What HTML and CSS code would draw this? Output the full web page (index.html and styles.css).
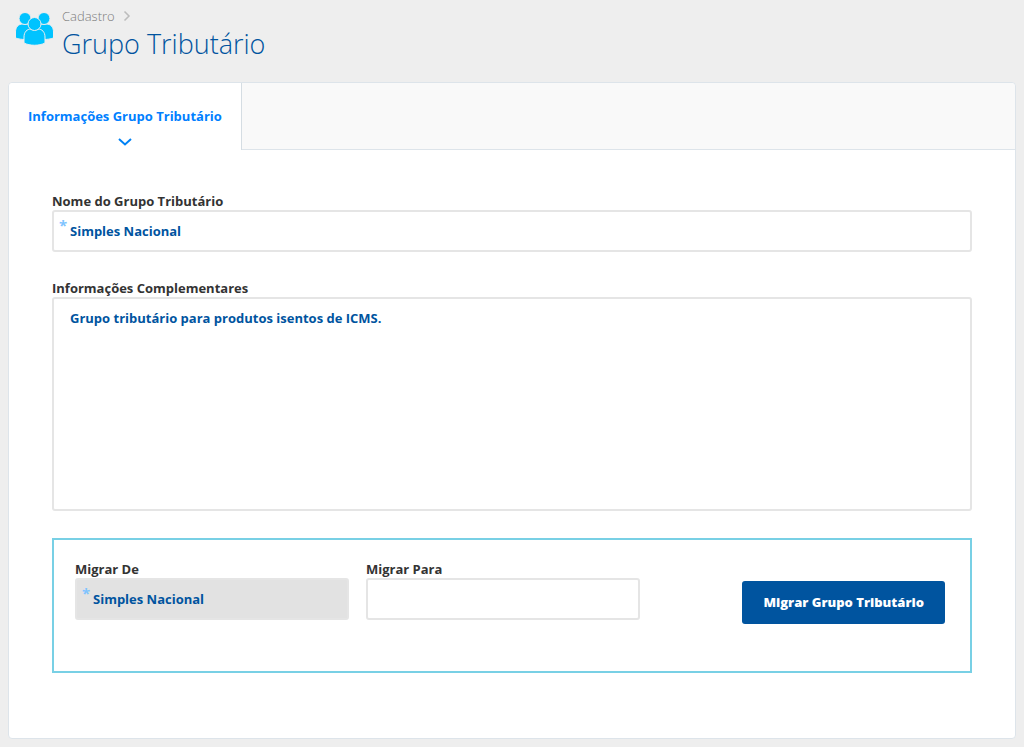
FILE: index.html
```html
<!DOCTYPE html>
<html lang="pt-BR">
<head>
<meta charset="utf-8">
<meta name="viewport" content="width=device-width, initial-scale=1">
<title>Grupo Tributário</title>
<link rel="stylesheet" href="styles.css">
</head>
<body>
<header class="page-header">
  <svg class="page-icon" viewBox="0 0 40 34" aria-hidden="true">
    <g fill="#00c3ff" stroke="#eeeeee" stroke-width="1">
      <path d="M.5 26V20c0-5 3-8 7-8h7c4 0 6 3 6 8v6c-6 2-14 2-20 0z"/>
      <path d="M38.500 26V20c0-5-3-8-7-8h-7c-4 0-6 3-6 8v6c6 2 14 2 20 0z"/>
      <circle cx="10" cy="6.500" r="6"/>
      <circle cx="29" cy="6.500" r="6"/>
      <path d="M9 31v-6c0-5 3-8 7-8h7c4 0 7 3 7 8v6c-6 3-15 3-21 0z"/>
      <circle cx="19.500" cy="12" r="6.500"/>
    </g>
  </svg>
  <div class="page-heading">
    <nav class="breadcrumb" aria-label="Navegação">
      <a href="#">Cadastro</a>
      <svg class="crumb-arrow" viewBox="0 0 8 12" aria-hidden="true"><path d="M1.500 1.500 6 6l-4.500 4.500" fill="none" stroke="#bcbcbc" stroke-width="1.500"/></svg>
    </nav>
    <h1 class="page-title">Grupo Tributário</h1>
  </div>
</header>
<main class="panel">
  <div class="tab-bar" role="tablist">
    <button class="tab" type="button" role="tab" aria-selected="true">
      <span>Informações Grupo Tributário</span>
      <svg class="tab-arrow" viewBox="0 0 14 8" aria-hidden="true"><path d="m1 1 6 5.500L13 1" fill="none" stroke="#0082f5" stroke-width="2"/></svg>
    </button>
  </div>
  <form class="form">
    <div class="field">
      <label class="label" for="nome">Nome do Grupo Tributário</label>
      <div class="control required">
        <input class="input" id="nome" type="text" value="Simples Nacional" required>
      </div>
    </div>
    <div class="field">
      <label class="label" for="info">Informações Complementares</label>
      <textarea class="input textarea" id="info" spellcheck="false">Grupo tributário para produtos isentos de ICMS.</textarea>
    </div>
    <section class="migrate">
      <div class="migrate-field">
        <label class="label" for="de">Migrar De</label>
        <div class="control required">
          <input class="input input-disabled" id="de" type="text" value="Simples Nacional" readonly>
        </div>
      </div>
      <div class="migrate-field">
        <label class="label" for="para">Migrar Para</label>
        <div class="control">
          <input class="input" id="para" type="text">
        </div>
      </div>
      <button class="submit" type="button">Migrar Grupo Tributário</button>
    </section>
  </form>
</main>
</body>
</html>
```
FILE: styles.css
```css
* {
  box-sizing: border-box;
}

body {
  display: flex;
  flex-direction: column;
  min-height: 100vh;
  margin: 0;
  padding: 8px;
  background: #eeeeee;
  color: #333333;
  font-family: "Open Sans", sans-serif;
  font-size: 13px;
  line-height: 18px;
}

.page-header {
  display: flex;
  gap: 7px;
  padding: 0 7px 20px;
}

.page-icon {
  width: 40px;
  height: 34px;
  margin-top: 4px;
}

.breadcrumb {
  display: flex;
  align-items: center;
  gap: 8px;
  height: 16px;
}

.breadcrumb a {
  color: #7c7c7c;
  font-weight: 300;
  text-decoration: none;
}

.crumb-arrow {
  width: 8px;
  height: 12px;
}

.page-title {
  margin: 2px 0 0;
  color: #00549f;
  font-size: 27px;
  font-weight: 300;
  line-height: 36px;
}

.panel {
  flex: 1;
  background: #ffffff;
  border: 1px solid #dde4ea;
  border-radius: 4px;
}

.tab-bar {
  display: flex;
  background: #f9f9f9;
  border-radius: 4px 4px 0 0;
  box-shadow: inset 0 -1px #dde4ea;
}

.tab {
  display: flex;
  flex-direction: column;
  align-items: center;
  gap: 13px;
  padding: 24px 19px 4px;
  background: #ffffff;
  border: 0;
  border-right: 1px solid #d5dde3;
  border-radius: 4px 0 0 0;
  color: #0080ff;
  font: inherit;
  font-weight: 700;
}

.tab-arrow {
  width: 14px;
  height: 8px;
}

.form {
  display: flex;
  flex-direction: column;
  gap: 27px;
  padding: 42px 43px 60px;
}

.field,
.migrate-field {
  display: flex;
  flex-direction: column;
}

.label {
  font-weight: 700;
}

.control {
  position: relative;
}

.required::before {
  content: "*";
  position: absolute;
  top: 6px;
  left: 7px;
  color: #80c4ff;
  font-size: 15px;
  font-weight: 700;
}

.input {
  display: block;
  width: 100%;
  height: 42px;
  padding: 0 16px;
  background: #ffffff;
  border: 2px solid #e5e5e5;
  border-radius: 3px;
  color: #00549f;
  font: inherit;
  font-weight: 700;
}

.textarea {
  height: 214px;
  padding: 10px 16px;
  resize: none;
}

.input-disabled {
  background: #e2e2e2;
}

.migrate {
  display: flex;
  align-items: flex-start;
  gap: 17px;
  padding: 20px 25px 47px 21px;
  border: 2px solid #78d0e5;
}

.migrate-field {
  flex: 0 1 274px;
}

.submit {
  margin: 21px 0 0 auto;
  padding: 12px 21px 13px;
  background: #00549f;
  border: 0;
  border-radius: 3px;
  color: #ffffff;
  font: inherit;
  font-weight: 800;
}
```
